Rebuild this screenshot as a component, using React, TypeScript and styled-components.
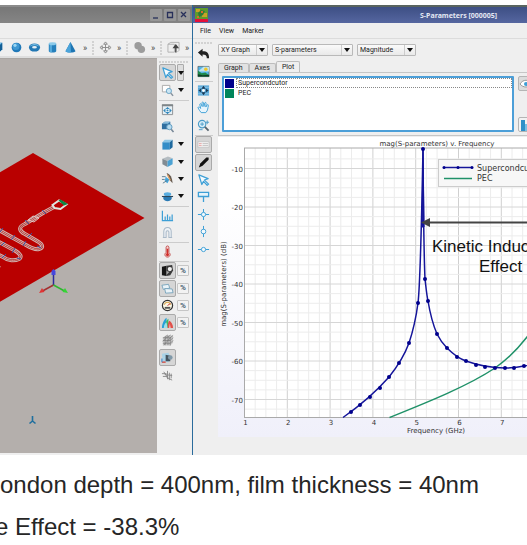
import React from 'react';
import styled, { createGlobalStyle, css } from 'styled-components';

const GlobalStyle = createGlobalStyle`
  * { box-sizing: border-box; }
  html, body { margin: 0; background: #fff; overflow-x: hidden; }
  body { font-family: Roboto, "Noto Sans", sans-serif; font-size: 7px; color: #222; }
  button, select { font: inherit; color: inherit; margin: 0; padding: 0; }
  svg { display: block; flex: none; }
`;

/* ---------- icons, 14 x 14 ---------- */

const BLUE = '#3d9fd6';

const icons: Record<string, React.ReactNode> = {
  box: (<><path d="M-1 5 3 2h8v7l-3 3h-9z" fill="#2c86c2" /><path d="M-1 5 3 2h8L8 5z" fill="#79c3ea" /><path d="M8 5l3-3v7l-3 3z" fill="#135f96" /></>),
  sphere: (<><circle cx="7" cy="7" r="5.2" fill="#1f78b8" /><circle cx="6.4" cy="6" r="3.8" fill="#3f98d2" /><circle cx="5.4" cy="4.7" r="1.7" fill="#9ad6f3" /></>),
  torus: (<><ellipse cx="7" cy="7" rx="6" ry="4.4" fill="#2378b4" /><path d="M2 6c1-3 8-4 10 0-3-2-7-2-10 0z" fill="#78bfe6" /><ellipse cx="7" cy="6.8" rx="2.6" ry="1.3" fill="#e4eef4" /></>),
  cylinder: (<><path d="M3 3v8c0 2 8 2 8 0V3z" fill="#2680bc" /><path d="M4 4h2.4v8H4z" fill="#55aadc" /><ellipse cx="7" cy="3" rx="4" ry="1.6" fill="#8dcbea" /></>),
  cone: (<><path d="M7 1 12.4 11c-1 2-9.800 2-10.800 0z" fill="#1d75b3" /><path d="M7 1 7.500 12.400C5 12.500 2 12 1.600 11z" fill="#4ba4da" /></>),
  move: (<g stroke="#888" strokeWidth="1" fill="none"><path d="M7 2v10M2 7h10" /><path d="M5 3.500 7 1l2 2.500zM5 10.500 7 13l2-2.500zM3.500 5 1 7l2.500 2zM10.500 5 13 7l-2.500 2z" fill="#eee" /></g>),
  blob: (<g fill="#9c9c9c"><circle cx="5.500" cy="5" r="4" /><circle cx="9" cy="9" r="4" /></g>),
  extrude: (<><path d="M1 3.500h7V12H1zM1 3.500 4 1.500h9V10l-2 2" fill="#efefef" stroke="#aaa" strokeWidth=".9" /><path d="M9.500 12.500V6M7.500 7l2-2.500L11.500 7z" stroke="#444" strokeWidth="1.500" fill="#444" /></>),
  arrow: (<path d="M2 2l10 4-4 1.600L12.500 12 11 13.200 7 9 5.200 12.400z" fill="#f6fbfe" stroke={BLUE} strokeWidth="1.300" strokeLinejoin="round" />),
  zoomBox: (<><path d="M1.500 1.500h8v7h-8z" fill="#fff" stroke="#aaa" /><circle cx="8.500" cy="7.500" r="2.800" fill="#c9e5f4" stroke="#6aa3c4" /><path d="M10.500 9.800 13 12.800" stroke="#8894a0" strokeWidth="1.600" /></>),
  fit: (<><path d="M1.500 2h11v10.500h-11z" fill="#e6f0f5" stroke="#8b8f92" /><path d="M1 1.500h12v2H1z" fill="#7f8588" /><path d="M7 4.200 9.200 6.400H4.800zM7 12 9.200 9.800H4.800zM2.400 8.100l2.400-2.300v4.600zM11.600 8.100 9.200 5.800v4.600z" fill="#3287bb" /><circle cx="7" cy="8" r="1" fill="#3287bb" /></>),
  zoomObj: (<><path d="M1 4l3-2h6v6L7 10H1z" fill="#2f6ea0" /><path d="M1 4l3-2h6L7.500 4z" fill="#89bddd" /><circle cx="9" cy="7.600" r="2.900" fill="#b9dcf0" stroke="#5f9cc0" /><path d="M11 10l2.400 3" stroke="#788898" strokeWidth="1.600" /></>),
  cube: (<><path d="M1.500 4.500h8v8h-8z" fill="#328dc8" /><path d="M1.500 4.500 4 2h8.500l-3 2.500z" fill="#8cc6e6" /><path d="M9.500 4.500l3-2.500v8l-3 2.500z" fill="#1f6a9f" /></>),
  cubeIso: (<><path d="M1.500 4 7.500 1.500l5 2-5.500 3z" fill="#b5bdc2" /><path d="M1.500 4 7 6.500v6.500l-5.500-3z" fill="#828c93" /><path d="M7 6.500l5.500-3V10L7 13z" fill="#4aa1d3" /></>),
  cut: (<><path d="M6 1c4 1 6 5 6.500 11L9.500 9z" fill="#665a50" /><path d="M5 5l4 3-2 4-3-2z" fill="#45a6dc" /><path d="M1 5h4M1 8h3M2 12l5-3" stroke="#5b7c90" /><path d="M7 3l3 6" stroke="#e2a264" strokeWidth="1.300" /></>),
  disc: (<><path d="M2.500 7h9v2.500c-1 3.500-8 3.500-9 0z" fill="#2a7ab4" /><ellipse cx="7" cy="4.500" rx="4" ry="2" fill="#59ade0" /><path d="M1 7h12" stroke="#2c4558" strokeWidth="1.200" /></>),
  bars: (<path d="M1.500 2v10.500H13M4.500 12V8M7 12V6M9.500 12V8M12 12V6" fill="none" stroke={BLUE} strokeWidth="1.300" />),
  probe: (<path d="M3 12.500V6c0-6 8-6 8 0v6.500H8.500V6.500c0-2-3-2-3 0v6zM2 12.500h4M8 12.500h4" fill="#eef2f6" stroke="#a9b9c8" strokeWidth="1.100" />),
  thermo: (<><path d="M5.500 2.500c0-2 3-2 3 0V8c2.600 2 1 5-1.500 5S3 10 5.500 8z" fill="#f8d6d4" stroke="#bf4a48" /><path d="M7 4v7" stroke="#cf2f2c" strokeWidth="1.600" /><circle cx="7" cy="10.500" r="1.600" fill="#cf2f2c" /></>),
  film: (<><path d="M1 3l5-1v11l-5-1z" fill="#161616" /><path d="M6 2l6-1 1 6-3 5-4 1z" fill="#3a3a3a" /><circle cx="9.500" cy="5.500" r="2.300" fill="#f2f2f2" /><path d="M6 7.500l3 1-3 3z" fill="#aaa" /></>),
  layers: (<g fill="#eaf3f8" stroke="#6e9db8" strokeWidth=".9"><path d="M1 3.500l7-1 1.500 4-7 1.500z" /><path d="M4 7l8 .5 1 4-8 .5z" /></g>),
  gauge: (<><circle cx="7" cy="7" r="5.500" fill="#fbf6e4" stroke="#333" strokeWidth="1.300" /><path d="M3.500 6a3.700 3.700 0 0 1 7 0" fill="none" stroke="#d9a24a" strokeWidth="1.300" /><path d="M7 7l3-2" stroke="#c33" /><path d="M4 8.500h6v2H4z" fill="#555" /></>),
  spectrum: (<><path d="M1 13c0-4 2-9 5-11v11z" fill="#28a0d8" /><path d="M4 13c0-4 2-9 4-10v10z" fill="#3fb86b" /><path d="M7 13c0-4 1-7 2-8 2 1 4 4 4 8z" fill="#e0504a" /><path d="M3 13c0-4 2-6 3-6l1 6z" fill="#9fe0e8" /><path d="M8.500 13l1-5 1 5z" fill="#f3b0ac" /></>),
  mesh: (<><path d="M2 4l3-2.500h8v8L10 12.500H2z" fill="#c6c6c6" /><path d="M2 4h8v8.500M2 7h8l3-3M2 10h8l3-3M4.500 12V3l3-2M7.500 12V3l3-2M10 4l3-2.500M3 12l8-9M2 8l6-6" stroke="#777" strokeWidth=".7" fill="none" /></>),
  probeBox: (<><path d="M1 3l7-1 2 4-2 6-6-1z" fill="#a9d3e8" /><path d="M5 4l5 1v6H5z" fill="#44535e" /><circle cx="10" cy="7" r="2.500" fill="#7f98a8" /><path d="M1 12h4" stroke="#d2554d" strokeWidth="1.600" /><path d="M1 12V8" stroke="#3a8bd0" strokeWidth="1.200" /></>),
  hatch: (<path d="M1 5h5M2 8h5M3 3l4 6M7 2v9M9 4v8M11 5v5M4 6l8 1M6 9l6 3" stroke="#888" strokeWidth="1" />),
  undo: (<path d="M1 6l5-4v2.600c5 0 7 2 7 7.400h-2.400c0-3-1.600-4-4.600-4V10.500z" fill="#222" />),
  picture: (<><path d="M1 1.500h12v11H1z" fill="#56b4e4" stroke="#444" strokeWidth=".6" /><path d="M1 7h12V2H7z" fill="#bfe4ee" /><circle cx="9.500" cy="4.500" r="1.900" fill="#f2c62a" /><path d="M1 12.500V6l4 3 4-1 4 3v1.500z" fill="#1e8a4c" /><path d="M1 10l5 1 7-.5v2H1z" fill="#123e25" /></>),
  fitWide: (<><path d="M1 1.500h12v11H1z" fill="#58a8d8" /><path d="M1 3.500h12M1 10.500h12" stroke="#8cc6e8" strokeWidth="1" /><path d="M7 2 9.200 5H4.800zM7 12 9.200 9H4.800zM1.500 7l3-2.200v4.400zM12.500 7l-3-2.200v4.400z" fill="#1b3a55" /><circle cx="7" cy="7" r="1.500" fill="#fff" /></>),
  hand: (<path d="M4.500 12.500C3 11 2 9 1.200 7.500c-.4-1 .8-1.500 1.500-.7L4 8 3 4c-.2-1.200 1.200-1.500 1.600-.4L5.600 6l-.2-4c0-1.200 1.500-1.200 1.600 0L7.500 6l.8-3.800c.3-1 1.600-.8 1.500.3L9.500 6.500l1.400-2.200c.6-.9 1.700-.3 1.400.6C11.500 7.500 12 10 9.500 12.500z" fill="#e8f5fc" stroke={BLUE} strokeWidth="1" />),
  zoomIn: (<><circle cx="5.500" cy="5.500" r="4" fill="#d7edf8" stroke="#4b9cc8" strokeWidth="1.200" /><path d="M5.500 3.500v4M3.500 5.500h4M11 1.500v4M9.500 3.500h3.500M2 11.500h4" stroke="#4b9cc8" /><path d="M8.500 8.500l4 4" stroke="#56646e" strokeWidth="2" /></>),
  legend: (<><path d="M1 4h12v6H1z" fill="#f4f4f4" stroke="#bbb" strokeWidth=".7" /><path d="M2 6h3M2 8h3" stroke="#e08080" strokeWidth=".7" /><path d="M6 6h6M6 8h6" stroke="#aaa" strokeWidth=".7" /></>),
  pen: (<path d="M2 12.500 3.500 8 10 1.500h2.500V4L6 10.500z" fill="#111" />),
  flag: (<path d="M1.500 2.500h11V7h-11zM7 7v6" fill="#e6f4fb" stroke={BLUE} strokeWidth="1.400" />),
  cross: (<><path d="M7 1v12M1 7h12" stroke={BLUE} strokeWidth="1.100" /><circle cx="7" cy="7" r="2.300" fill="#f2f9fd" stroke={BLUE} /></>),
  vert: (<><path d="M7 1v12" stroke={BLUE} strokeWidth="1.100" /><circle cx="7" cy="7" r="2.500" fill="#f2f9fd" stroke={BLUE} /></>),
  horiz: (<><path d="M1 7h12" stroke={BLUE} strokeWidth="1.100" /><circle cx="7" cy="7" r="2.300" fill="#f2f9fd" stroke={BLUE} /></>),
  eye: (<><path d="M1 7c3-5 9-5 12 0-3 4-9 4-12 0z" fill="#fff" stroke="#999" /><circle cx="7" cy="7" r="2" fill={BLUE} /></>),
  chart: (<><path d="M2 2h4v11H2z" fill="#2f8fc8" /><path d="M6 6h4v7H6z" fill="#7abfe4" /></>),
};

const Icon = ({ name, size = 14 }: { name: string; size?: number }) => (
  <svg width={size} height={size} viewBox="0 0 14 14" aria-hidden="true">{icons[name]}</svg>
);

const Caret = () => (
  <svg width="6" height="4" viewBox="0 0 6 4" aria-hidden="true"><path d="M0 0h6L3 4z" fill="#111" /></svg>
);

/* ---------- layout ---------- */

const Page = styled.main`
  padding-top: 5px;
`;

const Desktop = styled.section`
  display: grid;
  grid-template-columns: 192px minmax(0, 1fr);
`;

const Window = styled.section<{ $edge?: boolean }>`
  display: flex;
  flex-direction: column;
  min-width: 0;
  overflow: hidden;
  background: #efefef;
  ${(p) => p.$edge && css`border-left: 1px solid #2a6b9c;`}
`;

const TitleBar = styled.header<{ $active?: boolean }>`
  display: flex;
  align-items: center;
  height: 18px;
  padding: 0 2px;
  border-top: 2px solid ${(p) => (p.$active ? '#59645f' : '#8b8b8b')};
  background: ${(p) => (p.$active ? 'linear-gradient(#3d4f84, #5566a0)' : 'linear-gradient(#777, #858585)')};
`;

const WindowButtons = styled.div`
  display: flex;
  gap: 2px;
  margin-left: auto;
`;

const WindowButton = styled.button`
  display: grid;
  place-items: center;
  width: 12px;
  height: 12px;
  border: 0;
  border-radius: 1px;
  background: #979797;
`;

const TitleText = styled.h1`
  flex: 1;
  margin: 0;
  padding-left: 212px;
  font: 700 7px "Noto Sans", sans-serif;
  color: #e3e7f2;
  white-space: nowrap;
`;

const MenuBar = styled.nav`
  display: flex;
  align-items: center;
  gap: 8px;
  height: 16px;
  padding: 0 7px;
  border-bottom: 1px solid #dcdcdc;
`;

const MenuButton = styled.button`
  border: 0;
  background: none;
`;

const ToolBar = styled.div`
  display: flex;
  align-items: center;
  justify-content: space-between;
  height: 19px;
  margin-left: -8px;
  padding-right: 2px;
  border-bottom: 2px solid #dedede;
`;

const ToolSet = styled.div`
  display: flex;
  align-items: center;
  gap: 5px;
`;

const IconButton = styled.button<{ $pressed?: boolean }>`
  display: grid;
  place-items: center;
  width: 17px;
  height: 17px;
  border: 1px solid ${(p) => (p.$pressed ? '#aaa' : 'transparent')};
  border-radius: 2px;
  background: ${(p) => (p.$pressed ? '#d6d6d6' : 'transparent')};
`;

const FlatButton = styled.button`
  border: 0;
  background: none;
`;

const Chevron = styled(FlatButton)`
  width: 6px;
  font-size: 9px;
  line-height: 8px;
  color: #444;
`;

const Grip = styled.span<{ $across?: boolean }>`
  flex: none;
  width: ${(p) => (p.$across ? 'auto' : '3px')};
  height: ${(p) => (p.$across ? '3px' : '14px')};
  background: radial-gradient(circle at 1px 1px, #d2d2d2 0 1px, transparent 1px) 0 0 / 3px 3px;
`;

const Body = styled.div`
  display: flex;
  flex: 1;
  min-height: 0;
`;

const Canvas = styled.div`
  flex: 1;
  min-width: 0;
  margin-bottom: 2px;
  border-top: 1px solid #aaa6a3;
  background: #b4afac;
`;

const SideBar = styled.div`
  display: flex;
  flex-direction: column;
  flex: 0 0 35px;
  padding: 3px 3px 0 2px;
`;

const Group = styled.div<{ $rows: number }>`
  display: flex;
  flex-direction: column;
  height: ${(p) => Math.round(p.$rows * 17.5)}px;
  & + & { margin-top: 1px; border-top: 1px solid #ccc; }
`;

const SideRow = styled.div`
  display: flex;
  flex: 1;
  align-items: center;
  gap: 1px;
`;

const DropButton = styled.button<{ $pressed?: boolean }>`
  display: grid;
  place-items: center;
  width: 7px;
  height: 17px;
  border: 1px solid ${(p) => (p.$pressed ? '#aaa' : 'transparent')};
  border-radius: 1px;
  background: ${(p) => (p.$pressed ? '#dedede' : 'transparent')};
`;

const PercentButton = styled.button`
  width: 12px;
  height: 11px;
  border: 1px solid #c6c6c6;
  border-radius: 1px;
  background: #f2f2f2;
  font-weight: 700;
  font-size: 8px;
  line-height: 8px;
  color: #4a6274;
`;

const GraphTools = styled.div`
  display: flex;
  flex: 0 0 21px;
  flex-direction: column;
  padding: 3px 1px 0 2px;
`;

const GraphMain = styled.div`
  display: flex;
  flex: 1;
  flex-direction: column;
  min-width: 0;
  padding: 5px 0 18px 4px;
`;

const Combos = styled.div`
  display: flex;
  gap: 4px;
`;

const ComboBox = styled.label<{ $width: number }>`
  display: grid;
  grid-template-columns: 1fr 10px;
  align-items: center;
  width: ${(p) => p.$width}px;
  height: 12px;
  border: 1px solid #b9b9b9;
  border-radius: 1px;
  background: linear-gradient(#fafafa, #e9e9e9);
  & > svg { margin-left: 2px; }
`;

const Select = styled.select`
  appearance: none;
  height: 10px;
  padding-left: 2px;
  border: 0;
  border-right: 1px solid #ccc;
  background: none;
  outline: 0;
  line-height: 10px;
`;

const Tabs = styled.div`
  display: flex;
  align-items: flex-end;
  height: 11px;
  margin-top: 5px;
`;

const Tab = styled.button<{ $active?: boolean }>`
  height: ${(p) => (p.$active ? 12 : 9)}px;
  margin-bottom: ${(p) => (p.$active ? -1 : 0)}px;
  padding: 0 5px;
  border: 1px solid #bdbdbd;
  border-bottom: 0;
  border-radius: 2px 2px 0 0;
  background: ${(p) => (p.$active ? '#efefef' : '#e2e2e2')};
  line-height: 7px;
`;

const TabPanel = styled.div`
  display: flex;
  gap: 4px;
  height: 64px;
  padding: 3px 0 3px 3px;
  border: solid #c6c6c6;
  border-width: 1px 0 1px 1px;
`;

const List = styled.ul`
  flex: 1;
  margin: 0;
  padding: 0;
  border: 2px solid #4c9fd8;
  border-radius: 1px;
  background: #fff;
  list-style: none;
`;

const ListRow = styled.li<{ $color: string; $focus?: boolean }>`
  display: flex;
  align-items: center;
  gap: 2px;
  height: 10px;
  padding-left: 1px;
  &::before {
    content: "";
    width: 9px;
    height: 9px;
    background: ${(p) => p.$color};
  }
  span {
    flex: 1;
    height: 10px;
    padding-left: 1px;
    border: 1px ${(p) => (p.$focus ? 'dotted #888' : 'solid transparent')};
    line-height: 9px;
  }
`;

const ListActions = styled.div`
  display: flex;
  flex: 0 0 9px;
  flex-direction: column;
  justify-content: space-between;
  overflow: hidden;
`;

const ListAction = styled.button<{ $pressed?: boolean }>`
  width: 18px;
  height: 15px;
  border: 1px solid #b5b5b5;
  border-radius: 2px;
  background: ${(p) => (p.$pressed ? '#dcdcdc' : '#f2f2f2')};
`;

const ChartPanel = styled.figure`
  margin: 1px 0 0;
  height: 300px;
  background: linear-gradient(#fff 20%, #f0f0fa);
`;

const Notes = styled.section`
  display: grid;
  gap: 8px;
  padding-top: 13px;
  font: 24px/34px "Liberation Sans", sans-serif;
  color: #262626;
  overflow: hidden;
`;

const Note = styled.p<{ $outdent?: boolean }>`
  margin: 0;
  margin-left: ${(p) => (p.$outdent ? '-5px' : 0)};
  white-space: nowrap;
`;

/* ---------- modelling canvas ---------- */

const MEANDER = [
  'M54 148 43 154 33 160 25 165C18 168 19 172 25 175L37 182C44 186 43 189 39 190 35 191 31 189 26 186L-3 170',
  'M-3 182 14 191C21 195 22 198 19 200 15 202 8 202 3 198L-3 195',
  'M-3 208l3 1',
];

const TRACE = [
  { stroke: '#d3b3b0', width: 4 },
  { stroke: '#b02422', width: 2 },
  { stroke: '#cfa9a6', width: 1 },
];

const Model = () => (
  <svg width="100%" height="394" role="img" aria-label="Chip model">
    <path d="M-10 119 33 94l111.500 65L-10 248.500z" fill="#b90000" />
    <g fill="none">
      {TRACE.map(({ stroke, width }) => (
        <g key={stroke} stroke={stroke} strokeWidth={width}>
          {MEANDER.map((d) => <path key={d} d={d} />)}
        </g>
      ))}
      <path d="M28 161l5-4 6 2-5 4z" stroke="#ddc5c3" />
      <path d="M42 151l4 4M25 161l4 4M28 178l4-4M23 187l3-5M37 187l4 2M11 181l4-5M0 173l3-4M1 187l4-4M12 194l3-5M2 199l4-4M17 199l4 1" stroke="#3a55a3" />
      <path d="M52.500 146 59 141.500l7.500 4-6 4.500-6-1z" fill="#b90000" stroke="#dfe5e0" strokeWidth="2" />
    </g>
    <path d="M58.500 141.500l2-1 7.500 4.500-4 1.500z" fill="#0c8743" />
    <g strokeWidth="1.500" fill="none">
      <path d="M53.500 226v-12" stroke="#2a2a9c" />
      <path d="M53.500 226l-11 6" stroke="#a33030" />
      <path d="M53.500 226l11 6" stroke="#2fb62f" />
    </g>
    <path d="M51.500 216v-4l2-2 2 2v4z" fill="#4647dd" />
    <path d="M39 234l3-5 2.500 4z" fill="#e03434" />
    <path d="M68 234l-3-5-2.500 4z" fill="#35d535" />
    <path d="M32.500 362v-5M32.500 362l-3 2.500M32.500 362l3 2.500" stroke="#1f6f9e" strokeWidth="1.600" />
  </svg>
);

/* ---------- chart ---------- */

const xAt = (ghz: number) => 26.5 + (ghz - 1) * 42.8;
const yAt = (db: number) => 31.5 + (-10 - db) * 3.85;
const PLOT_TOP = 11;
const PLOT_BOTTOM = 280.5;

const quarters = Array.from({ length: 60 }, (_, i) => 1 + i / 4);
const levels = Array.from({ length: 27 }, (_, i) => -7.5 - i * 2.5);

const samples = [
  [133, 275], [142, 268], [152, 260], [162, 251], [171, 240], [181, 226], [191, 206], [200, 166], [205, 12],
  [207, 142], [210, 164], [219, 197], [229, 211], [239, 220], [248, 224], [258, 228], [267, 230], [277, 231],
  [287, 231], [296, 231], [306, 229],
];

const Chart = () => (
  <svg width="100%" height="300" fontFamily="DejaVu Sans, sans-serif" fontSize="7" fill="#333" role="img" aria-label="S-parameter magnitude">
    <rect x="26.500" y={PLOT_TOP} width="100%" height={PLOT_BOTTOM - PLOT_TOP} fill="#fff" />
    {quarters.map((f) => (
      <path key={f} d={`M${xAt(f)} ${PLOT_TOP}V${PLOT_BOTTOM}`} stroke={f % 1 ? '#ececec' : '#d0d0d0'} />
    ))}
    {levels.map((l) => (
      <line key={l} x1="26.500" x2="100%" y1={yAt(l)} y2={yAt(l)} stroke={l % 10 ? '#ececec' : '#d6d6d6'} />
    ))}
    <line x1="26" x2="100%" y1={PLOT_TOP} y2={PLOT_TOP} stroke="#aaa" />
    <line x1="26" x2="100%" y1={PLOT_BOTTOM} y2={PLOT_BOTTOM} stroke="#aaa" />
    <path d={`M26.500 ${PLOT_TOP}V${PLOT_BOTTOM}`} stroke="#aaa" />

    <text x="219" y="9" textAnchor="middle">mag(S-parameters) v. Frequency</text>
    <text x="218" y="296" textAnchor="middle">Frequency (GHz)</text>
    <text transform="translate(8 147) rotate(-90)" textAnchor="middle">mag(S-parameters) (dB)</text>
    {[-10, -20, -30, -40, -50, -60, -70].map((l) => (
      <text key={l} x="25" y={yAt(l) + 3} textAnchor="end">{l}</text>
    ))}
    {[1, 2, 3, 4, 5, 6, 7].map((f) => (
      <text key={f} x={xAt(f) + 1} y="288" textAnchor="middle">{f}</text>
    ))}

    <path d="M171.500 280.500C210 265 250 249 277 231 290 222 302 209 309 200 316 192 322 182 328 170" fill="none" stroke="#1f9168" strokeWidth="1.500" />
    <path d="M125 280.500C140 270 156 257 171 240 179 230 187 217 191 206 195 194 198 181 200 166 202.500 145 203 110 205 12 205.500 90 206 120 207 142 208 150 208.500 157 210 164 213 182 216 190 219 197 222 203 225 207 229 211 236 218 242 222 248 224 262 229 272 231 287 231 294 231 300 230.500 306 229 312 228 318 226 324 224" fill="none" stroke="#15159a" strokeWidth="1.500" />
    <path d="M204 90 205 12l1 78z" fill="#15159a" stroke="#15159a" />
    {samples.map(([x, y]) => (
      <circle key={x} cx={x} cy={y} r="2" fill="#00008c" />
    ))}

    <rect x="220.500" y="22.500" width="130" height="27" fill="#f7f7f7" stroke="#ccc" />
    <path d="M226 30.500h28" stroke="#15159a" strokeWidth="1.500" />
    {[226, 240, 254].map((x) => <circle key={x} cx={x} cy="30.500" r="1.500" fill="#00008c" />)}
    <path d="M226 41.500h28" stroke="#1f9168" strokeWidth="1.500" />
    <g fontSize="8">
      <text x="259" y="34">Supercondcutor</text>
      <text x="259" y="44">PEC</text>
    </g>

    <path d="M210 85.500h160" stroke="#444" strokeWidth="2" />
    <path d="M203 85.500l9-4.500v9z" fill="#444" />
    <g fontFamily="Liberation Sans, sans-serif" fontSize="17" fill="#111">
      <text x="214" y="115">Kinetic Inductance</text>
      <text x="261" y="135">Effect</text>
    </g>
  </svg>
);

/* ---------- data ---------- */

type SideItem = { icon: string; drop?: boolean; percent?: boolean; pressed?: boolean };

const modelGroups: SideItem[][] = [
  [{ icon: 'arrow', drop: true, pressed: true }, { icon: 'zoomBox', drop: true }],
  [{ icon: 'fit' }, { icon: 'zoomObj' }, { icon: 'cube', drop: true }, { icon: 'cubeIso', drop: true }, { icon: 'cut', drop: true }, { icon: 'disc', drop: true }],
  [{ icon: 'bars' }, { icon: 'probe' }],
  [{ icon: 'thermo' }],
  [
    { icon: 'film', percent: true, pressed: true },
    { icon: 'layers', percent: true, pressed: true },
    { icon: 'gauge', percent: true },
    { icon: 'spectrum', percent: true, pressed: true },
    { icon: 'mesh' },
    { icon: 'probeBox', pressed: true },
    { icon: 'hatch' },
  ],
];

const graphGroups: SideItem[][] = [
  [{ icon: 'undo' }, { icon: 'picture' }],
  [{ icon: 'fitWide' }, { icon: 'hand' }, { icon: 'zoomIn' }],
  [{ icon: 'legend', pressed: true }, { icon: 'pen', pressed: true }, { icon: 'arrow' }, { icon: 'flag' }, { icon: 'cross' }, { icon: 'vert' }, { icon: 'horiz' }],
];

const SideGroups = ({ groups }: { groups: SideItem[][] }) => (
  <>
    {groups.map((items) => (
      <Group key={items[0].icon} $rows={items.length}>
        {items.map((item) => (
          <SideRow key={item.icon}>
            <IconButton $pressed={item.pressed} aria-label={item.icon}><Icon name={item.icon} size={13} /></IconButton>
            {item.drop && <DropButton $pressed={item.pressed} aria-label={`${item.icon} options`}><Caret /></DropButton>}
            {item.percent && <PercentButton>%</PercentButton>}
          </SideRow>
        ))}
      </Group>
    ))}
  </>
);

const Combo = ({ label, value, width }: { label: string; value: string; width: number }) => (
  <ComboBox $width={width}>
    <Select aria-label={label} defaultValue={value}><option>{value}</option></Select>
    <Caret />
  </ComboBox>
);

const Shape = ({ name }: { name: string }) => (
  <FlatButton aria-label={name}><Icon name={name} size={13} /></FlatButton>
);

export default function App() {
  return (
    <Page>
      <GlobalStyle />
      <Desktop>
        <Window>
          <TitleBar>
            <WindowButtons>
              {['M3 9h5', 'M3.500 3.500h5v5h-5z', 'M3 3l5 5M8 3l-5 5'].map((d, i) => (
                <WindowButton key={d} aria-label={['Minimize', 'Maximize', 'Close'][i]}>
                  <svg width="12" height="12" viewBox="0 0 12 12"><path d={d} fill="none" stroke="#28305a" strokeWidth="1.300" /></svg>
                </WindowButton>
              ))}
            </WindowButtons>
          </TitleBar>
          <MenuBar aria-label="Model menu" />
          <ToolBar>
            <ToolSet>
              <Shape name="box" /><Shape name="sphere" /><Shape name="torus" /><Shape name="cylinder" /><Shape name="cone" />
              <Chevron>»</Chevron>
            </ToolSet>
            <Grip />
            <Shape name="move" /><Chevron>»</Chevron><Grip />
            <Shape name="blob" /><Chevron>»</Chevron><Grip />
            <Shape name="extrude" /><Chevron>»</Chevron>
          </ToolBar>
          <Body>
            <Canvas><Model /></Canvas>
            <SideBar>
              <Grip $across />
              <SideGroups groups={modelGroups} />
            </SideBar>
          </Body>
        </Window>

        <Window $edge>
          <TitleBar $active>
            <svg width="13" height="14" viewBox="0 0 13 14" aria-hidden="true">
              <path d="M0 0h13v11H0z" fill="#5e9a2e" />
              <path d="M1 1h4v3H1zM7 5h5v4H7z" fill="#c9a227" />
              <path d="M3 5l3-3 4 1-2 4-4 2z" fill="#2f7a34" />
              <path d="M6 3h2v2H6zM2 8h2v2H2z" fill="#d86b2a" />
              <path d="M0 11h13v3H0z" fill="#e3103a" />
            </svg>
            <TitleText>S-Parameters [000005]</TitleText>
          </TitleBar>
          <MenuBar aria-label="Graph menu">
            <MenuButton>File</MenuButton><MenuButton>View</MenuButton><MenuButton>Marker</MenuButton>
          </MenuBar>
          <Body>
            <GraphTools>
              <Grip $across />
              <SideGroups groups={graphGroups} />
            </GraphTools>
            <GraphMain>
              <Combos>
                <Combo label="Graph type" value="XY Graph" width={50} />
                <Combo label="Data" value="S-parameters" width={81} />
                <Combo label="Component" value="Magnitude" width={59} />
              </Combos>
              <Tabs role="tablist">
                <Tab role="tab">Graph</Tab><Tab role="tab">Axes</Tab><Tab role="tab" aria-selected $active>Plot</Tab>
              </Tabs>
              <TabPanel role="tabpanel">
                <List>
                  <ListRow $color="#00008b" $focus><span>Supercondcutor</span></ListRow>
                  <ListRow $color="#00855a"><span>PEC</span></ListRow>
                </List>
                <ListActions>
                  <ListAction $pressed aria-label="Show trace"><Icon name="eye" /></ListAction>
                  <ListAction aria-label="Trace style"><Icon name="chart" /></ListAction>
                </ListActions>
              </TabPanel>
              <ChartPanel><Chart /></ChartPanel>
            </GraphMain>
          </Body>
        </Window>
      </Desktop>
      <Notes>
        <Note>ondon depth = 400nm, film thickness = 40nm</Note>
        <Note $outdent>e Effect = -38.3%</Note>
      </Notes>
    </Page>
  );
}
